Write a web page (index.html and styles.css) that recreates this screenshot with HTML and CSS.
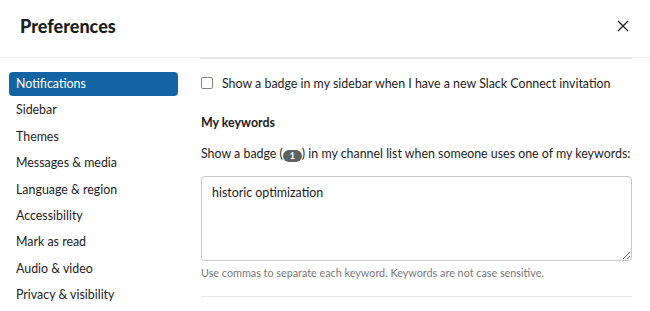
FILE: index.html
```html
<!DOCTYPE html>
<html lang="en">

<head>
  <meta charset="UTF-8">
  <title>Preferences</title>
  <link rel="stylesheet" href="styles.css">
</head>

<body>
  <div class="dialog">
    <div class="header">
      <span class="title">Preferences</span>
      <span class="close">
        <svg width="12" height="12" viewBox="0 0 12 12">
          <path d="M1 1L11 11M11 1L1 11" stroke="#1d1c1d" stroke-width="1.3" fill="none"/>
        </svg>
      </span>
    </div>

    <div class="body">
      <div class="menu">
        <div class="item active">Notifications</div>
        <div class="item">Sidebar</div>
        <div class="item">Themes</div>
        <div class="item">Messages &amp; media</div>
        <div class="item">Language &amp; region</div>
        <div class="item">Accessibility</div>
        <div class="item">Mark as read</div>
        <div class="item">Audio &amp; video</div>
        <div class="item">Privacy &amp; visibility</div>
      </div>

      <div class="content">
        <label class="check">
          <span class="box"></span>
          <span>Show a badge in my sidebar when I have a new Slack Connect invitation</span>
        </label>

        <div class="heading">My keywords</div>

        <div class="desc">Show a badge (<span class="badge">1</span>) in my channel list when someone uses one of my keywords:</div>

        <textarea class="keywords">historic optimization</textarea>

        <div class="hint">Use commas to separate each keyword. Keywords are not case sensitive.</div>

        <div class="divider"></div>
      </div>
    </div>
  </div>
</body>
</html>
```

FILE: styles.css
```css
body {
  margin: 0;
  background: #fff;
  color: #1d1c1d;
  font-family: Lato, "Noto Sans", sans-serif;
  font-size: 12.4px;
}

.dialog {
  width: 650px;
  height: 311px;
  overflow: hidden;
}

.header {
  height: 57px;
  padding: 0 20px;
  display: flex;
  align-items: center;
  justify-content: space-between;
  border-bottom: 1px solid #ebebeb;
}

.title {
  font-size: 18px;
  font-weight: 900;
  margin-top: -5px;
}

.close {
  display: flex;
  margin-right: 1px;
  margin-top: -5px;
}

.body {
  display: flex;
}

.menu {
  width: 169px;
  padding: 14px 22px 0 9px;
}

.item {
  height: 24px;
  line-height: 24px;
  margin-bottom: 2.4px;
  padding: 0 7px;
  border-radius: 4px;
  color: #1d1c1d;
  white-space: nowrap;
}

.item.active {
  background: #1264a3;
  color: #fff;
}

.content {
  width: 431px;
  padding-left: 1px;
  border-top: 2px solid #e3e3e3;
  margin-top: -1px;
}

.check {
  display: flex;
  align-items: center;
  gap: 9px;
  margin-top: 16px;
  height: 16px;
}

.box {
  width: 10px;
  height: 10px;
  border: 1px solid #868686;
  border-radius: 2px;
}

.heading {
  font-weight: 700;
  margin-top: 24px;
  height: 16px;
  line-height: 16px;
}

.desc {
  margin-top: 15px;
  height: 16px;
  line-height: 16px;
  white-space: nowrap;
}

.badge {
  display: inline-block;
  width: 19px;
  height: 12px;
  line-height: 12px;
  border-radius: 6px;
  background: #616061;
  color: #fff;
  font-size: 9px;
  font-weight: 900;
  text-align: center;
  vertical-align: -1px;
}

.keywords {
  display: block;
  box-sizing: border-box;
  width: 431px;
  height: 85px;
  margin-top: 14px;
  padding: 8px 10px;
  border: 1px solid #c8c8c8;
  border-radius: 4px;
  font-family: Lato, "Noto Sans", sans-serif;
  font-size: 12.4px;
  line-height: 16px;
  color: #1d1c1d;
  outline: none;
}

.hint {
  margin-top: 5px;
  font-size: 10.8px;
  line-height: 14px;
  color: #7a7a7a;
}

.divider {
  margin-top: 16px;
  border-top: 1px solid #e8e8e8;
}
```
